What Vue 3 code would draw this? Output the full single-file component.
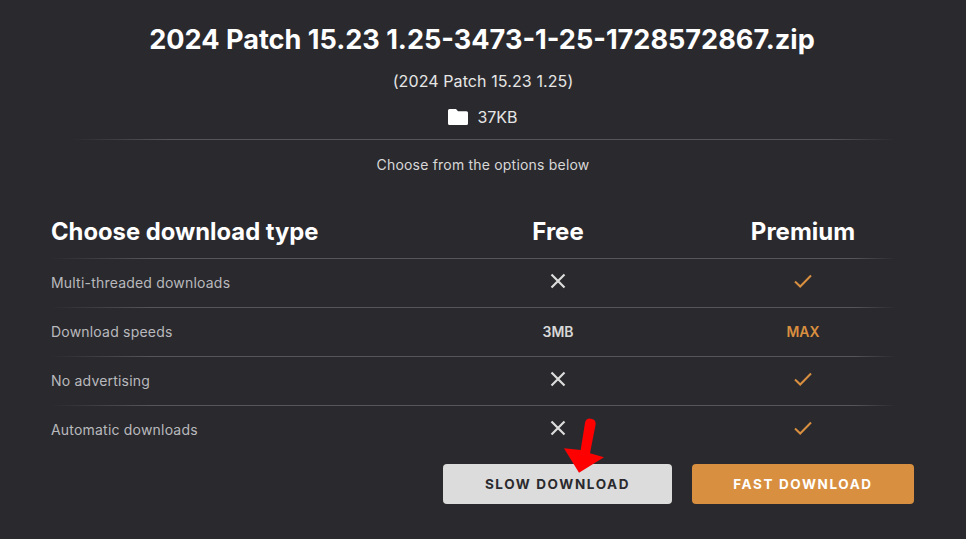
<template>
  <div class="page">
    <h1 class="file-name">2024 Patch 15.23 1.25-3473-1-25-1728572867.zip</h1>
    <p class="subtitle">(2024 Patch 15.23 1.25)</p>
    <div class="size">
      <svg class="folder" viewBox="0 0 20 16" width="20" height="16">
        <path d="M1.5 0H8l2 2.2h8.5A1.5 1.5 0 0 1 20 3.7v10.8a1.5 1.5 0 0 1-1.5 1.5h-17A1.5 1.5 0 0 1 0 14.5v-13A1.5 1.5 0 0 1 1.5 0z" fill="#fff" />
      </svg>
      <span>37KB</span>
    </div>
    <div class="divider"></div>
    <p class="hint">Choose from the options below</p>

    <div class="table">
      <div class="row head">
        <div class="label">Choose download type</div>
        <div class="cell">Free</div>
        <div class="cell">Premium</div>
      </div>
      <div v-for="row in rows" :key="row.label" class="row">
        <div class="label">{{ row.label }}</div>
        <div class="cell">
          <span v-if="row.free" class="speed">{{ row.free }}</span>
          <svg v-else class="mark" viewBox="0 0 16 16" width="16" height="16">
            <path d="M1.5 1.5 14.5 14.5M14.5 1.5 1.5 14.5" stroke="#dcdcdc" stroke-width="2.2" fill="none" />
          </svg>
        </div>
        <div class="cell">
          <span v-if="row.premium" class="speed orange">{{ row.premium }}</span>
          <svg v-else class="mark" viewBox="0 0 18 14" width="18" height="14">
            <path d="M1 7.5 6.2 12.5 17 1.5" stroke="#d98f40" stroke-width="2" fill="none" />
          </svg>
        </div>
      </div>
    </div>

    <div class="buttons">
      <button class="btn slow">
        SLOW DOWNLOAD
        <!-- 红色箭头盖在按钮上 -->
        <svg class="arrow" viewBox="0 0 48 62" width="48" height="62">
          <path d="M25 9a5.4 5.4 0 0 1 10.7 1L30 39.3 44 43.3 19 58.7 4 34.3 20.7 36z" fill="#f00" />
        </svg>
      </button>
      <button class="btn fast">FAST DOWNLOAD</button>
    </div>
  </div>
</template>

<script setup>
const rows = [
  { label: 'Multi-threaded downloads' },
  { label: 'Download speeds', free: '3MB', premium: 'MAX' },
  { label: 'No advertising' },
  { label: 'Automatic downloads' }
]
</script>

<style>
html,
body {
  margin: 0;
  background: #2a2a2e;
}
</style>

<style scoped>
.page {
  height: 539px;
  overflow: hidden;
  box-sizing: border-box;
  padding-top: 22px;
  background: #2a2a2e;
  color: #fff;
  font-family: Inter, "Liberation Sans", sans-serif;
  text-align: center;
}

.file-name {
  margin: 0;
  font-size: 27.1px;
  line-height: 36px;
  font-weight: 700;
  transform: translateX(-1px);
}

.subtitle {
  margin: 11px 0 0;
  font-size: 16px;
  line-height: 24px;
  letter-spacing: 0.1px;
  color: #e6e6e6;
}

.size {
  display: flex;
  justify-content: center;
  align-items: center;
  gap: 9px;
  margin-top: 12px;
  height: 24px;
  font-size: 16px;
  color: #e6e6e6;
}

.divider {
  height: 1px;
  margin: 10px 70px 0;
  background: linear-gradient(to right, transparent, #55555a 12%, #55555a 92%, transparent);
}

.hint {
  margin: 15px 0 0;
  font-size: 14px;
  line-height: 20px;
  letter-spacing: 0.2px;
  color: #d8d8d8;
}

.table {
  margin: 30px 0 0 51px;
  width: 844px;
}

.row {
  display: grid;
  grid-template-columns: 382px 250px 240px;
  align-items: center;
  box-sizing: border-box;
  height: 49px;
  padding-bottom: 2px;
  border-top: 1px solid;
  border-image: linear-gradient(to right, transparent, #55555a 12%, #55555a 95%, transparent) 1;
}

.row.head {
  height: 53px;
  padding-bottom: 1px;
  border-top: none;
  font-size: 24px;
  font-weight: 700;
  color: #fff;
}

.label {
  text-align: left;
  font-size: 14px;
  letter-spacing: 0.2px;
  color: #b9b9bd;
}

.head .label {
  font-size: 23.8px;
  letter-spacing: 0;
  color: #fff;
}

.cell {
  display: flex;
  justify-content: center;
  align-items: center;
}

.mark {
  margin-top: -2px;
}

.speed {
  font-size: 14px;
  font-weight: 600;
  color: #d8d8d8;
}

.orange {
  color: #d98f40;
}

.buttons {
  display: flex;
  justify-content: flex-end;
  gap: 20px;
  margin: 10px 52px 0 0;
}

.btn {
  position: relative;
  height: 40px;
  border: none;
  border-radius: 4px;
  font-family: Inter, "Liberation Sans", sans-serif;
  font-size: 13.5px;
  font-weight: 700;
  letter-spacing: 1.6px;
  color: #2a2a2e;
}

.slow {
  width: 229px;
  background: #dcdcdc;
}

.fast {
  width: 222px;
  background: #d98f40;
  color: #fff;
}

.arrow {
  position: absolute;
  left: 117px;
  top: -50px;
}
</style>
